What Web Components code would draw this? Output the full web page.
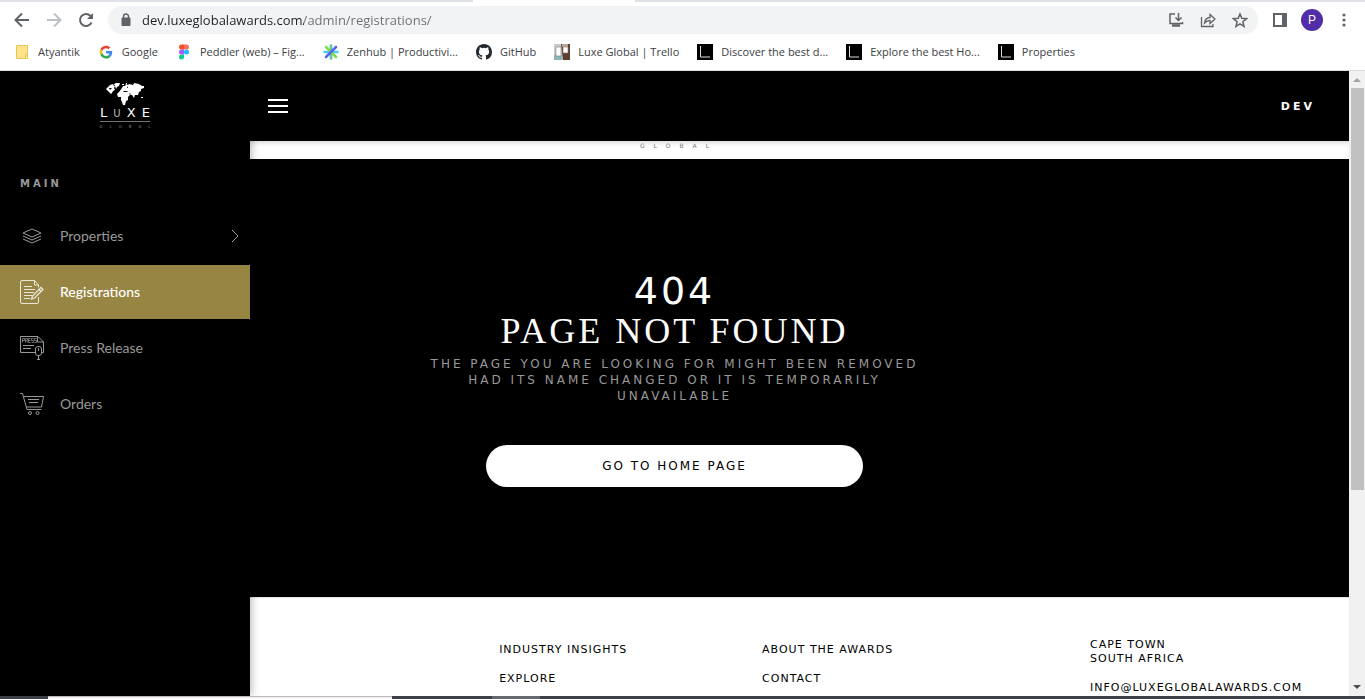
<!DOCTYPE html>
<html lang="en">
<head>
<meta charset="utf-8">
<title>Luxe Global Awards</title>
<style>
	html, body { height: 100%; }

	body {
		background: #fff;
		display: flex;
		flex-direction: column;
		font-family: "DejaVu Sans", sans-serif;
		margin: 0;
		overflow: hidden;
	}
</style>
</head>
<body>
	<browser-toolbar url="dev.luxeglobalawards.com/admin/registrations/"></browser-toolbar>
	<bookmarks-bar>
		<book-mark icon="folder">Atyantik</book-mark>
		<book-mark icon="google">Google</book-mark>
		<book-mark icon="figma">Peddler (web) – Fig...</book-mark>
		<book-mark icon="zenhub">Zenhub | Productivi...</book-mark>
		<book-mark icon="github">GitHub</book-mark>
		<book-mark icon="trello">Luxe Global | Trello</book-mark>
		<book-mark icon="luxe">Discover the best d...</book-mark>
		<book-mark icon="luxe">Explore the best Ho...</book-mark>
		<book-mark icon="luxe">Properties</book-mark>
	</bookmarks-bar>
	<admin-page>
		<side-bar slot="sidebar">
			<menu-item icon="layers" expandable>Properties</menu-item>
			<menu-item icon="form" active>Registrations</menu-item>
			<menu-item icon="press">Press Release</menu-item>
			<menu-item icon="cart">Orders</menu-item>
		</side-bar>
		<top-bar slot="header">DEV</top-bar>
		<not-found></not-found>
		<site-footer></site-footer>
	</admin-page>
	<task-strip></task-strip>

<script>
const icons = {
	folder: `<svg width="16" height="16" viewBox="0 0 16 16"><path d="M2.500 1.500h11v9.500h-2v3.500h-9z" fill="#ffe38c" stroke="#e9c44f"/><path d="M11.500 10.500h2v4h-2z" fill="#ffe9a8" stroke="#e9c44f"/></svg>`,
	google: `<svg width="16" height="16" viewBox="0 0 48 48"><g transform="translate(5 5) scale(.8)"><path fill="#ea4335" d="M24 9.500c3.540 0 6.710 1.220 9.210 3.600l6.850-6.850C35.900 2.380 30.470 0 24 0 14.620 0 6.510 5.380 2.560 13.220l7.980 6.190C12.430 13.720 17.740 9.500 24 9.500z"/><path fill="#4285f4" d="M46.980 24.550c0-1.570-.15-3.090-.38-4.550H24v9.020h12.940c-.58 2.960-2.260 5.480-4.780 7.180l7.730 6c4.510-4.180 7.090-10.360 7.090-17.650z"/><path fill="#fbbc05" d="M10.530 28.590A14.500 14.500 0 0 1 9.770 24c0-1.600.27-3.140.76-4.590l-7.980-6.190A24 24 0 0 0 0 24c0 3.880.92 7.540 2.560 10.780z"/><path fill="#34a853" d="M24 48c6.480 0 11.930-2.130 15.890-5.810l-7.730-6c-2.150 1.450-4.920 2.300-8.160 2.300-6.260 0-11.570-4.220-13.470-9.910l-7.980 6.190C6.510 42.620 14.620 48 24 48z"/></g></svg>`,
	figma: `<svg width="16" height="16" viewBox="0 0 16 16"><path d="M8 .5H5.500a2.500 2.500 0 0 0 0 5H8z" fill="#f24e1e"/><path d="M8 .5h2.500a2.500 2.500 0 0 1 0 5H8z" fill="#ff7262"/><path d="M8 5.500H5.500a2.500 2.500 0 0 0 0 5H8z" fill="#a259ff"/><circle cx="10.500" cy="8" r="2.500" fill="#1abcfe"/><path d="M8 10.500H5.500a2.500 2.500 0 1 0 2.500 2.500z" fill="#0acf83"/></svg>`,
	zenhub: `<svg width="16" height="16" viewBox="0 0 16 16" stroke-width="2.600" stroke-linecap="round"><path d="M8 1.500v13" stroke="#57c8a0"/><path d="M1.500 8h13" stroke="#45d0f0"/><path d="M3 3l10 10" stroke="#7fdc4a"/><path d="M13 3L3 13" stroke="#5e60ef"/></svg>`,
	github: `<svg width="16" height="16" viewBox="0 0 16 16"><path fill="#24292f" d="M8 0C3.580 0 0 3.580 0 8c0 3.540 2.290 6.530 5.470 7.590.4.070.55-.17.55-.38 0-.19-.01-.82-.01-1.490-2.010.37-2.530-.49-2.690-.94-.09-.23-.48-.94-.82-1.130-.28-.15-.68-.52-.01-.53.63-.01 1.080.58 1.230.82.72 1.210 1.870.87 2.330.66.07-.52.28-.87.51-1.070-1.780-.2-3.640-.89-3.640-3.950 0-.87.31-1.590.82-2.150-.08-.2-.36-1.020.08-2.120 0 0 .67-.21 2.200.82a7.600 7.600 0 0 1 4 0c1.530-1.040 2.200-.82 2.200-.82.44 1.100.16 1.920.08 2.120.51.56.82 1.270.82 2.150 0 3.070-1.870 3.750-3.650 3.950.29.25.54.73.54 1.480 0 1.070-.01 1.930-.01 2.200 0 .21.15.46.55.38A8 8 0 0 0 16 8c0-4.420-3.580-8-8-8z"/></svg>`,
	trello: `<svg width="16" height="16" viewBox="0 0 16 16"><path d="M0 0h16v16H0z" fill="#c4ccd0"/><path d="M7 0h9v16H9z" fill="#5d3f30"/><path d="M8 0h6v3H8z" fill="#b9a79b"/><path d="M0 11h8v5H0z" fill="#8fb4bb"/><path d="M2 3h5v9H2zM9 3h5v6H9z" fill="#fff" stroke="#8a7468" stroke-width=".6"/></svg>`,
	luxe: `<svg width="16" height="16" viewBox="0 0 16 16"><path d="M0 0h16v16H0z"/><path d="M3.500 2v11H13" fill="none" stroke="#ddd"/></svg>`,
	layers: `<svg width="24" height="24" viewBox="0 0 24 24" fill="none" stroke="currentColor"><path d="M12 5l9 4-9 4-9-4z"/><path d="M3 12l9 4 9-4M3 15l9 4 9-4"/></svg>`,
	form: `<svg width="24" height="24" viewBox="0 0 24 24" fill="none" stroke="currentColor"><path d="M18.500 7.500V5L14.500.5H2A1.500 1.500 0 0 0 .5 2v20A1.500 1.500 0 0 0 2 23.500h15a1.500 1.500 0 0 0 1.500-1.500v-5"/><path d="M14.500.5V5h4"/><path d="M4 6.500h8M4 9.500h11M4 12.500h10M4 15.500h8M4 18.500h6"/><path d="M21 7.500l2 2-8.500 8.500-3 1 1-3zM19 9.500l2 2" stroke-width="1.300"/></svg>`,
	press: `<svg width="24" height="24" viewBox="0 0 24 24" fill="none" stroke="currentColor"><path d="M15.500 16.500H.5V.5h17.500l5.500 5.500v10.500h-2"/><path d="M17.500.5V6h6"/><path d="M2.500 6.500v-4h2v2h-2M5.500 6.500v-4h2v2h-1l1 2M10.500 2.500h-2v4h2M8.500 4.500h2M13.500 2.500h-2v2h2v2h-2M16.500 2.500h-2v2h2v2h-2" stroke-width=".7"/><path d="M3 9.500h11M3 12.500h8"/><rect x="15.500" y="10.500" width="6" height="9" rx="2.500"/><path d="M18.500 12v3M18.500 19.500v4M17 23.500h3"/></svg>`,
	cart: `<svg width="24" height="24" viewBox="0 0 24 24" fill="none" stroke="currentColor"><path d="M0 1.500h2.500L7 17.500h14.500"/><path d="M4 4.500h19.500l-2 10.500H6.500"/><path d="M8 7.500h11M9 10.500h9"/><circle cx="10" cy="21" r="1.500"/><circle cx="17.500" cy="21" r="1.500"/></svg>`
};

class Base extends HTMLElement {
	constructor() {
		super();
		this.attachShadow( { mode: 'open' } );
	}

	connectedCallback() {
		this.shadowRoot.innerHTML = this.html();
	}
}

class BrowserToolbar extends Base {
	html() {
		return `
		<style>
			:host {
				color: #5f6368;
				display: block;
				font-family: "Open Sans", sans-serif;
			}

			.tabs {
				background: #dee1e6;
				display: flex;
				height: 2px;
				padding-left: 473px;
			}

			.tab {
				background: #fff;
				width: 162px;
			}

			.row {
				align-items: center;
				display: flex;
				height: 36px;
				padding: 0 8px;
			}

			button {
				align-items: center;
				background: none;
				border: 0;
				color: inherit;
				display: flex;
				height: 28px;
				justify-content: center;
				padding: 0;
				width: 32px;
			}

			.small { width: 28px; }

			.forward {
				color: #bdc1c6;
				width: 36px;
			}

			svg { display: block; }

			form {
				align-items: center;
				background: #f1f3f4;
				border-radius: 14px;
				display: flex;
				flex: 1;
				gap: 8px;
				height: 28px;
				margin: 0 6px 0 8px;
				padding: 0 2px 0 10px;
			}

			.actions { display: flex; }

			/* host part of the address is darker than the path */
			input {
				-webkit-background-clip: text;
				background-clip: text;
				background-image: linear-gradient(90deg, #202124 162px, #6b6f74 162px);
				border: 0;
				color: #5f6368;
				-webkit-text-fill-color: transparent;
				flex: 1;
				font: 13px/20px "Open Sans", sans-serif;
				min-width: 0;
				outline: 0;
				padding: 0;
			}

			.avatar {
				background: #512da8;
				border-radius: 50%;
				color: #fff;
				font-size: 12px;
				height: 22px;
				margin: 0 5px;
				width: 22px;
			}

			.menu { margin-right: -3px; }
		</style>

		<div class="tabs"><div class="tab"></div></div>
		<div class="row">
			<button aria-label="Back" class="small">
				<svg width="16" height="16" viewBox="0 0 16 16" fill="none" stroke="currentColor" stroke-width="2"><path d="M15 8H2M8 1.500L1.500 8 8 14.500"/></svg>
			</button>
			<button aria-label="Forward" class="forward">
				<svg width="16" height="16" viewBox="0 0 16 16" fill="none" stroke="currentColor" stroke-width="2"><path d="M1 8h13M8 1.500L14.500 8 8 14.500"/></svg>
			</button>
			<button aria-label="Reload" class="small">
				<svg width="16" height="16" viewBox="0 0 16 16" fill="none" stroke="currentColor" stroke-width="2"><path d="M13.500 10.500A6 6 0 1 1 12.500 4L14 5.500"/><path d="M15 1v6H9z" fill="currentColor" stroke="none"/></svg>
			</button>
			<form>
				<svg width="16" height="16" viewBox="0 0 16 16"><path d="M4 6h8v7.500H4z" fill="#5f6368" stroke="#5f6368" stroke-linejoin="round"/><path d="M5.500 6V4.500a2.500 2.500 0 0 1 5 0V6" fill="none" stroke="#5f6368" stroke-width="1.500"/></svg>
				<input type="text" aria-label="Address" value="${this.getAttribute('url')}">
				<div class="actions">
					<button type="button" aria-label="Install">
						<svg width="16" height="16" viewBox="0 0 16 16" fill="none" stroke="currentColor" stroke-width="1.500"><path d="M7 2H2v9.500h12.500V10M10.500 1v7M7.500 5.500l3 3 3-3"/><path d="M4 13.500h8" stroke-width="2.500"/></svg>
					</button>
					<button type="button" aria-label="Share">
						<svg width="16" height="16" viewBox="0 0 16 16" fill="none" stroke="currentColor" stroke-width="1.300"><path d="M1.500 5v9.500H13V12"/><path d="M4.500 11C5 7.500 7 5.500 10 5.500V2.500L15 7l-5 4.500V8.500c-2.500 0-4 .8-5.500 2.500z"/></svg>
					</button>
					<button type="button" aria-label="Bookmark">
						<svg width="16" height="16" viewBox="0 0 16 16" fill="none" stroke="currentColor" stroke-width="1.500"><path d="M8 2l1.800 4.300 4.700.4-3.600 3 1.100 4.600L8 11.800l-4 2.500 1.100-4.600-3.600-3 4.700-.4z"/></svg>
					</button>
				</div>
			</form>
			<button aria-label="Side panel">
				<svg width="14" height="14" viewBox="0 0 14 14"><path d="M1 1h12v12H1z" fill="none" stroke="currentColor" stroke-width="2"/><path d="M9 0h5v14H9z" fill="currentColor"/></svg>
			</button>
			<button class="avatar" aria-label="Profile">P</button>
			<button class="menu" aria-label="Menu">
				<svg width="4" height="14" viewBox="0 0 4 14" fill="currentColor"><circle cx="2" cy="2" r="1.600"/><circle cx="2" cy="7" r="1.600"/><circle cx="2" cy="12" r="1.600"/></svg>
			</button>
		</div>
	`;
	}
}

class BookmarksBar extends Base {
	html() {
		return `
		<style>
			:host {
				align-items: center;
				border-bottom: 1px solid #dadce0;
				box-sizing: border-box;
				display: flex;
				gap: 18px;
				height: 33px;
				padding: 0 14px 4px;
			}
		</style>
		<slot></slot>
	`;
	}
}

class BookMark extends Base {
	html() {
		return `
		<style>
			:host { display: block; }

			a {
				align-items: center;
				color: #3c4043;
				display: flex;
				font: 11px/16px "Open Sans", sans-serif;
				gap: 8px;
				text-decoration: none;
				white-space: nowrap;
			}

			svg { display: block; }
		</style>
		<a href="#">${icons[this.getAttribute('icon')]}<span><slot></slot></span></a>
	`;
	}
}

class AdminPage extends Base {
	html() {
		return `
		<style>
			:host {
				display: flex;
				flex: 1;
				min-height: 0;
			}

			#view {
				display: flex;
				flex: 1;
				flex-direction: column;
				min-width: 0;
				overflow: hidden;
				position: relative;
			}

			/* the drawer lies over the page, which keeps its full width */
			::slotted(side-bar) {
				bottom: 0;
				left: 0;
				position: absolute;
				top: 0;
				z-index: 2;
			}

			#logo {
				box-shadow: inset 0 5px 5px -3px rgba(0, 0, 0, .15);
				color: #777;
				flex: none;
				font-size: 6px;
				height: 18px;
				letter-spacing: 9px;
				line-height: 9px;
				text-align: center;
				text-indent: 9px;
			}

			#scroll {
				align-items: center;
				background: #f1f1f1;
				display: flex;
				flex-direction: column;
				width: 16px;
			}

			#scroll svg { flex: none; }

			#track { flex: 1; }

			#thumb {
				background: #c1c1c1;
				height: 68%;
				width: 13px;
			}
		</style>

		<div id="view">
			<slot name="sidebar"></slot>
			<slot name="header"></slot>
			<div id="logo">GLOBAL</div>
			<slot></slot>
		</div>
		<div id="scroll">
			<svg width="16" height="17" viewBox="0 0 16 17"><path d="M4 11l4-4 4 4z" fill="#a3a3a3"/></svg>
			<div id="track"><div id="thumb"></div></div>
			<svg width="16" height="17" viewBox="0 0 16 17"><path d="M4 6l4 4 4-4z" fill="#505050"/></svg>
		</div>
	`;
	}
}

class TopBar extends Base {
	html() {
		return `
		<style>
			:host {
				align-items: center;
				background: #000;
				box-sizing: border-box;
				color: #fff;
				display: flex;
				flex: none;
				font-size: 11px;
				font-weight: bold;
				height: 70px;
				justify-content: space-between;
				letter-spacing: 3px;
				padding: 0 34px 0 268px;
			}

			button {
				background: none;
				border: 0;
				display: flex;
				flex-direction: column;
				gap: 4px;
				padding: 0;
				width: 20px;
			}

			i {
				background: #fff;
				height: 2px;
				width: 100%;
			}
		</style>
		<button aria-label="Toggle menu"><i></i><i></i><i></i></button>
		<span><slot></slot></span>
	`;
	}
}

class LuxeLogo extends Base {
	html() {
		return `
		<style>
			:host {
				align-items: center;
				color: #fff;
				display: flex;
				flex-direction: column;
				width: 50px;
			}

			svg { display: block; }

			.name {
				align-items: baseline;
				border-bottom: 1px solid #777;
				display: flex;
				font-size: 13px;
				justify-content: space-between;
				line-height: 16px;
				width: 100%;
			}

			.name small {
				color: #bbb;
				font-size: 10px;
				line-height: 10px;
			}

			.global {
				color: #888;
				font-size: 4px;
				letter-spacing: 7px;
				line-height: 10px;
				margin-right: -7px;
			}
		</style>
		<svg width="38" height="22" viewBox="0 0 38 22" fill="#fff"><path d="M0 6l2-2 2-2 3-1 1 2h1l-1 2 1 2-2 1-1 2-1 1-2-2-1-1z"/><path d="M8 1l2-1 4 0-1 3-2 1-1 2-1-3z"/><path d="M16 5l1-2 2 0 1-2 2 1 1-1 4 1 1-2 5 1 3 2 2 0v2l-3 1 0 2-2 1-1 3-3 0-1 3-2-3-2 0-2 2 0 3-2 1-1 4-2 0-1-3-1-2 0-3-3 0-1-3 2-2z"/><path d="M16 1h2v1h-2zM20 0h1v1h-1zM35 14h2v1h-2z"/><path d="M3 5l3 0-2 2zM17 8l3 0 3 1-5 0zM24 10l1 2-2-1zM21 3l1 2-1 0z" fill="#000"/></svg>
		<div class="name"><span>L</span><small>U</small><span>X</span><span>E</span></div>
		<div class="global">GLOBAL</div>
	`;
	}
}

class SideBar extends Base {
	html() {
		return `
		<style>
			:host {
				background: #000;
				box-shadow: 2px 0 8px rgba(0, 0, 0, .25);
				color: #999;
				display: block;
				width: 250px;
			}

			header {
				box-sizing: border-box;
				display: flex;
				height: 70px;
				justify-content: center;
				padding-top: 12px;
			}

			h2 {
				font-size: 10px;
				letter-spacing: 3px;
				line-height: 16px;
				margin: 35px 20px 17px;
			}

			nav {
				display: flex;
				flex-direction: column;
				gap: 2px;
			}
		</style>
		<header><luxe-logo></luxe-logo></header>
		<h2>MAIN</h2>
		<nav><slot></slot></nav>
	`;
	}
}

class MenuItem extends Base {
	html() {
		const arrow = this.hasAttribute('expandable')
			? `<svg width="8" height="14" viewBox="0 0 8 14" fill="none" stroke="currentColor"><path d="M1 1l6 6-6 6"/></svg>`
			: '';
		return `
		<style>
			:host { display: block; }

			:host([active]) {
				background: #978544;
				color: #fff;
			}

			a {
				align-items: center;
				color: inherit;
				display: flex;
				font: 14px/20px Lato, sans-serif;
				gap: 16px;
				height: 54px;
				padding: 0 11px 0 20px;
				text-decoration: none;
			}

			:host([active]) a { font-weight: 500; }

			:host([active]) svg { opacity: .8; }

			span { flex: 1; }
		</style>
		<a href="#">${icons[this.getAttribute('icon')]}<span><slot></slot></span>${arrow}</a>
	`;
	}
}

class NotFound extends Base {
	html() {
		return `
		<style>
			:host {
				align-items: center;
				background: #000;
				color: #fff;
				display: flex;
				flex: none;
				flex-direction: column;
				padding: 112px 0 110px;
				text-align: center;
			}

			h1, h2, p { margin: 0; }

			h1, h2 {
				font-weight: normal;
				letter-spacing: 3px;
				line-height: 40px;
			}

			h1 { font-size: 38px; }

			h2 {
				font-family: "Liberation Serif", serif;
				font-size: 36px;
			}

			p {
				color: #999;
				font-size: 12px;
				letter-spacing: 3px;
				line-height: 16px;
				margin: 5px 0 41px;
			}

			a {
				background: #fff;
				border-radius: 21px;
				color: #000;
				font-size: 12px;
				letter-spacing: 2px;
				line-height: 42px;
				text-decoration: none;
				width: 28%;
			}
		</style>
		<h1>404</h1>
		<h2>PAGE NOT FOUND</h2>
		<p>THE PAGE YOU ARE LOOKING FOR MIGHT BEEN REMOVED<br>HAD ITS NAME CHANGED OR IT IS TEMPORARILY<br>UNAVAILABLE</p>
		<a href="#">GO TO HOME PAGE</a>
	`;
	}
}

class SiteFooter extends Base {
	html() {
		return `
		<style>
			:host {
				background: #fff;
				border-top: 1px solid #e6e6e6;
				color: #000;
				display: grid;
				flex: 1 0 auto;
				font-size: 11px;
				grid-template-columns: 263fr 328fr 259fr;
				letter-spacing: 1px;
				line-height: 14px;
				padding: 40px 0 0 37%;
			}

			div {
				display: flex;
				flex-direction: column;
				gap: 15px;
				min-width: 0;
			}

			.links { padding-top: 5px; }

			a {
				color: inherit;
				text-decoration: none;
			}
		</style>
		<div class="links">
			<a href="#">INDUSTRY INSIGHTS</a>
			<a href="#">EXPLORE</a>
		</div>
		<div class="links">
			<a href="#">ABOUT THE AWARDS</a>
			<a href="#">CONTACT</a>
		</div>
		<div>
			<span>CAPE TOWN<br>SOUTH AFRICA</span>
			<a href="#">INFO@LUXEGLOBALAWARDS.COM</a>
		</div>
	`;
	}
}

class TaskStrip extends Base {
	html() {
		return `
		<style>
			:host {
				background: #3d4047;
				display: flex;
				flex: none;
				height: 3px;
				padding-left: 48px;
			}

			.open {
				background: #f5f3f3;
				border-top: 1px solid #b9b7b7;
				box-sizing: border-box;
				width: 344px;
			}

			.idle {
				background: #66696d;
				margin-left: 100px;
				width: 48px;
			}
		</style>
		<div class="open"></div>
		<div class="idle"></div>
	`;
	}
}

customElements.define('browser-toolbar', BrowserToolbar);
customElements.define('bookmarks-bar', BookmarksBar);
customElements.define('book-mark', BookMark);
customElements.define('admin-page', AdminPage);
customElements.define('top-bar', TopBar);
customElements.define('luxe-logo', LuxeLogo);
customElements.define('side-bar', SideBar);
customElements.define('menu-item', MenuItem);
customElements.define('not-found', NotFound);
customElements.define('site-footer', SiteFooter);
customElements.define('task-strip', TaskStrip);
</script>
</body>
</html>
